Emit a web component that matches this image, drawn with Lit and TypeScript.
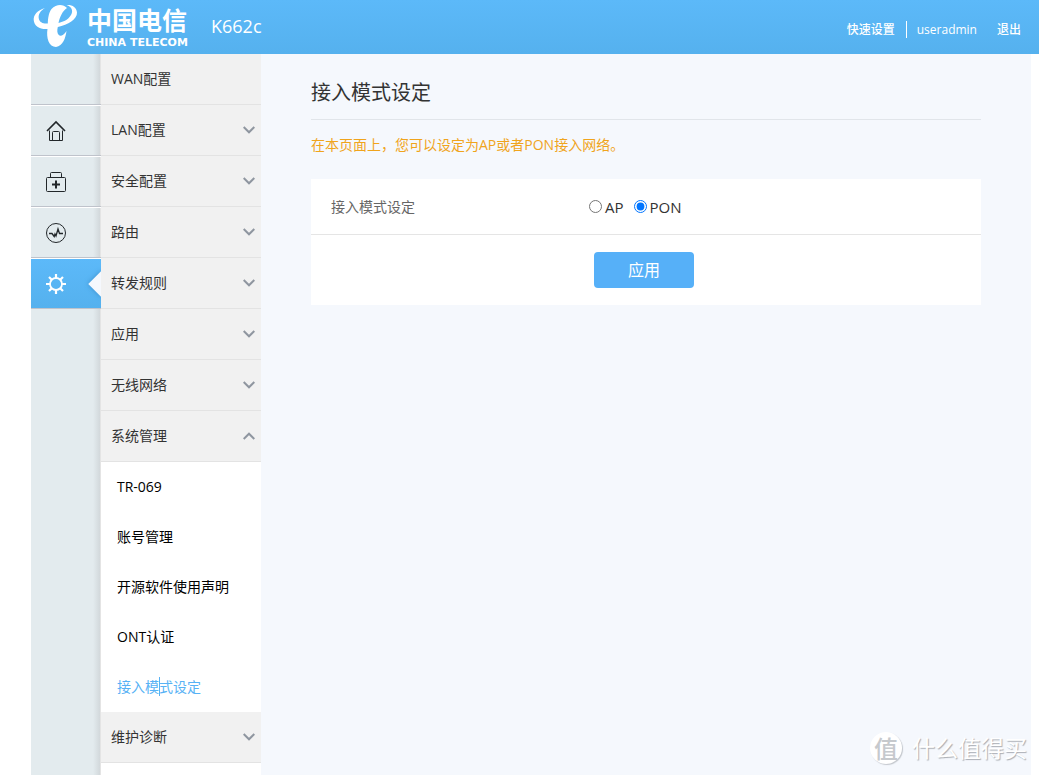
import { LitElement, html, css, svg, nothing } from "lit";
import { customElement, state } from "lit/decorators.js";

interface MenuGroup {
  label: string;
  children?: string[];
}

const MENU: MenuGroup[] = [
  { label: "WAN配置" },
  { label: "LAN配置", children: [] },
  { label: "安全配置", children: [] },
  { label: "路由", children: [] },
  { label: "转发规则", children: [] },
  { label: "应用", children: [] },
  { label: "无线网络", children: [] },
  { label: "系统管理", children: ["TR-069", "账号管理", "开源软件使用声明", "ONT认证", "接入模式设定"] },
  { label: "维护诊断", children: [] },
];

const homeIcon = svg`<path d="M1 11 L10 2 L19 11" stroke-width="1.6"/><path d="M3.5 10.5 V20.5 H16.5 V10.5"/><path d="M6.5 20.5 V12.5 Q6.5 11.5 7.5 11.5 H12.5 Q13.5 11.5 13.5 12.5 V20.5"/>`;
const kitIcon = svg`<rect x="0.5" y="6.5" width="19" height="14" rx="1"/><path d="M4.5 6.5 V2.5 Q4.5 1.5 5.5 1.5 H14.5 Q15.5 1.5 15.5 2.5 V6.5"/><path d="M6 13.5 H14 M10 9.5 V17.5" stroke-width="2"/>`;
const pulseIcon = svg`<circle cx="10" cy="11" r="9.5"/><path d="M3 11.5 H6 L8.2 14.5 L9 12 L10 14 L12 7 L13.5 11.5 H17" stroke-width="1.3"/>`;
const gearIcon = svg`<circle cx="10" cy="11" r="6" stroke-width="1.8"/><path d="M10 1 V5 M10 17 V21 M0 11 H4 M16 11 H20 M3 4 L5.8 6.8 M14.2 15.2 L17 18 M17 4 L14.2 6.8 M5.8 15.2 L3 18" stroke-width="2.2"/>`;

const RAIL = [
  { name: "首页", icon: homeIcon },
  { name: "向导", icon: kitIcon },
  { name: "状态", icon: pulseIcon },
  { name: "设置", icon: gearIcon },
];

@customElement("top-bar")
class TopBar extends LitElement {
  static styles = css`
    :host { display: block; }
    header {
      display: flex;
      align-items: center;
      height: 54px;
      padding: 0 18px 0 31px;
      box-sizing: border-box;
      color: #fff;
      background: linear-gradient(#5cb9f9, #55b1ee);
    }
    .brand { display: flex; align-items: center; height: 54px; gap: 9px; }
    .mark { width: 47px; height: 54px; fill: #fff; }
    .names { display: flex; flex-direction: column; width: 100px; padding-bottom: 4px; }
    .cn { font: 700 25px/36px "Noto Sans CJK SC", sans-serif; }
    .en { font: 700 11px/12px "DejaVu Sans", sans-serif; white-space: nowrap; }
    .model { margin: 0 0 2px 24px; font-size: 18px; line-height: 24px; }
    nav { display: flex; align-items: center; margin: 4px 0 0 auto; font-size: 12px; line-height: 17px; font-weight: 500; }
    a { color: #fff; text-decoration: none; }
    .first { padding-right: 11px; border-right: 1px solid #fff; margin-right: 10px; }
    .last { margin-left: 20px; }
  `;
  render() {
    return html`<header>
      <div class="brand">
        <svg class="mark" viewBox="0 0 47 54" aria-hidden="true">
          <path d="M14 8 C6 10.5 2.5 15 2.7 20 C3.2 26.5 9 29.5 16.5 29 C15 38 18 47 25 47 C32 46 34.5 38 35.5 31 C33 35 29.5 37 27.8 35 C26 33 26 30.5 26.8 27 C37 25 46.3 19 46 12.5 C45.5 7 41 4.5 35.5 5 C41 7 42 10.5 40.5 14 C38.5 18.5 34 21.5 27.5 23 C29 16.5 31.5 11 36 8 C32 3.5 25 4 20.5 9 C17.5 13 17 18.5 16.8 23.5 C12.5 24 8.5 22.5 7.8 18.5 C7 14.5 9.5 10.5 14 8 Z"/>
        </svg>
        <div class="names"><span class="cn">中国电信</span><span class="en">CHINA TELECOM</span></div>
      </div>
      <span class="model">K662c</span>
      <nav>
        <a class="first" href="#quick">快速设置</a>
        <a href="#user">useradmin</a>
        <a class="last" href="#exit">退出</a>
      </nav>
    </header>`;
  }
}

@customElement("icon-rail")
class IconRail extends LitElement {
  static styles = css`
    :host {
      display: block;
      background: linear-gradient(90deg, #e3ebee 62px, #d2d8db 69px, #e4e4e4 69px);
    }
    .cell, .blank {
      display: flex;
      align-items: center;
      width: 100%;
      height: 51px;
      box-sizing: border-box;
      padding: 0 0 0 15px;
      border: 0 solid #bfc3cb;
      border-bottom-width: 1px;
      border-top: 1px solid #fff;
      background: none;
      color: #22272a;
      overflow: hidden;
    }
    .blank { border-top: 0; }
    svg { width: 20px; height: 22px; fill: none; stroke: currentColor; stroke-width: 1; }
    .on {
      position: relative;
      color: #fff;
      background: linear-gradient(#5cb9f9, #55b1ee);
    }
    .on::after {
      content: "";
      position: absolute;
      right: -9px;
      top: 16px;
      width: 18px;
      height: 18px;
      transform: rotate(45deg);
      background: #f5f8fd;
      box-shadow: 0 0 5px #3c8fcc;
    }
  `;
  render() {
    return html`<div class="blank"></div>${RAIL.map(
      (r, i) => html`<button class="cell ${i === 3 ? "on" : ""}" aria-label=${r.name}>
        <svg viewBox="0 0 20 22">${r.icon}</svg>
      </button>`
    )}`;
  }
}

@customElement("side-menu")
class SideMenu extends LitElement {
  @state() open = "系统管理";
  static styles = css`
    :host { display: block; background: #fff; }
    .group {
      display: flex;
      align-items: center;
      justify-content: space-between;
      width: 100%;
      height: 51px;
      box-sizing: border-box;
      padding: 0 6px 0 10px;
      border: 0;
      border-bottom: 1px solid #e3e3e3;
      background: #f1f1f1;
      color: #333;
      font: inherit;
      text-align: left;
    }
    svg { width: 12px; height: 8px; fill: none; stroke: #8f96a0; stroke-width: 2; }
    .up { transform: rotate(180deg); }
    .sub {
      display: block;
      padding: 0 16px;
      line-height: 50px;
      color: #000;
      text-decoration: none;
    }
    .active { position: relative; color: #57b2f5; }
    .caret { position: absolute; left: 58px; top: 15px; width: 1px; height: 19px; background: #57b2f5; }
  `;
  toggle(label: string) {
    this.open = this.open === label ? "" : label;
  }
  render() {
    return html`${MENU.map((g) => {
      const isOpen = g.label === this.open;
      return html`<button class="group" @click=${() => this.toggle(g.label)}>
          <span>${g.label}</span>
          ${g.children
            ? html`<svg class=${isOpen ? "up" : ""} viewBox="0 0 12 8"><path d="M0.7 1 L6 6.3 L11.3 1"/></svg>`
            : nothing}
        </button>
        ${isOpen
          ? g.children?.map((c) =>
              c === "接入模式设定"
                ? html`<a class="sub active" href="#mode">${c}<span class="caret"></span></a>`
                : html`<a class="sub" href="#sub">${c}</a>`
            )
          : nothing}`;
    })}`;
  }
}

@customElement("mode-panel")
class ModePanel extends LitElement {
  static styles = css`
    :host { display: block; padding: 20px 50px; background: #f5f8fd; color: #333; }
    h1 {
      margin: 0;
      padding: 5px 0 12px;
      border-bottom: 1px solid #e1e5ea;
      font-size: 20px;
      line-height: 28px;
      font-weight: 400;
    }
    .tip { margin: 15px 0 24px; line-height: 20px; color: #f0a41c; }
    form { background: #fff; }
    fieldset {
      display: grid;
      grid-template-columns: 256px 1fr;
      align-items: center;
      height: 56px;
      box-sizing: border-box;
      margin: 0;
      padding: 0 20px;
      border: 0;
      border-bottom: 1px solid #e5e5e5;
    }
    .name { color: #666; }
    .choices { display: flex; gap: 8px; }
    label { display: flex; align-items: center; gap: 3px; font-size: 15px; }
    input { width: 13px; height: 13px; margin: 0 0 0 2px; }
    .actions { display: flex; justify-content: center; padding: 17px 4px 17px 0; }
    .apply {
      width: 100px;
      height: 36px;
      padding: 0;
      border: 0;
      border-radius: 4px;
      background: #56b0f8;
      color: #fff;
      font: inherit;
      font-size: 16px;
    }
  `;
  render() {
    return html`<h1>接入模式设定</h1>
      <p class="tip">在本页面上，您可以设定为AP或者PON接入网络。</p>
      <form @submit=${(e: Event) => e.preventDefault()}>
        <fieldset aria-labelledby="mode-name">
          <span class="name" id="mode-name">接入模式设定</span>
          <div class="choices">
            <label><input type="radio" name="mode" value="ap" />AP</label>
            <label><input type="radio" name="mode" value="pon" checked />PON</label>
          </div>
        </fieldset>
        <div class="actions"><button class="apply" type="submit">应用</button></div>
      </form>`;
  }
}

@customElement("app-root")
class AppRoot extends LitElement {
  static styles = css`
    :host {
      display: flex;
      flex-direction: column;
      position: relative;
      min-height: 100vh;
      background: #fff;
      font: 14px/20px "Open Sans", "Noto Sans CJK SC", sans-serif;
    }
    main {
      flex: 1;
      display: grid;
      grid-template-columns: 70px 160px 1fr;
      padding: 0 8px 0 31px;
    }
    .stamp {
      position: absolute;
      right: 12px;
      bottom: 10px;
      display: flex;
      align-items: center;
      gap: 10px;
      color: #fff;
      font-size: 23px;
      line-height: 34px;
      text-shadow: 1px 1px 1px #a9adb3;
    }
    .seal {
      width: 32px;
      height: 32px;
      border-radius: 50%;
      background: #fff;
      box-shadow: 1px 1px 1px #c3c7cd;
      color: #c6c9cd;
      font: 500 24px/32px "Noto Sans CJK SC", sans-serif;
      text-align: center;
      text-shadow: none;
    }
  `;
  render() {
    return html`<top-bar></top-bar>
      <main>
        <icon-rail></icon-rail>
        <side-menu></side-menu>
        <mode-panel></mode-panel>
      </main>
      <div class="stamp"><span class="seal">值</span><span>什么值得买</span></div>`;
  }
}
